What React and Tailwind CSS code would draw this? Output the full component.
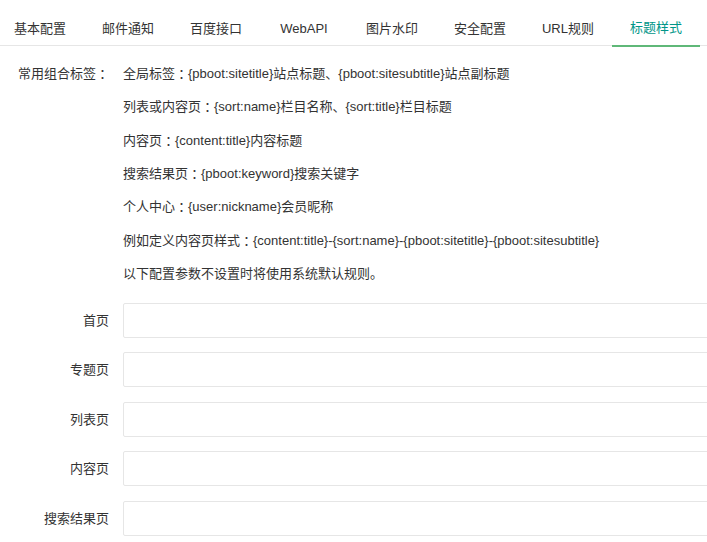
import React from 'react';

const tabs = ['基本配置', '邮件通知', '百度接口', 'WebAPI', '图片水印', '安全配置', 'URL规则', '标题样式'];

const tips = [
  ['全局标签', '{pboot:sitetitle}站点标题、{pboot:sitesubtitle}站点副标题'],
  ['列表或内容页', '{sort:name}栏目名称、{sort:title}栏目标题'],
  ['内容页', '{content:title}内容标题'],
  ['搜索结果页', '{pboot:keyword}搜索关键字'],
  ['个人中心', '{user:nickname}会员昵称'],
  ['例如定义内容页样式', '{content:title}-{sort:name}-{pboot:sitetitle}-{pboot:sitesubtitle}']
];

const fields = [
  { name: 'index_title', label: '首页' },
  { name: 'special_title', label: '专题页' },
  { name: 'list_title', label: '列表页' },
  { name: 'content_title', label: '内容页' },
  { name: 'search_title', label: '搜索结果页' }
];

// centred full-width colon, like the Windows rendering in the screenshot
const Colon = () => (
  <span style={{ fontFamily: '"Noto Sans CJK TC", sans-serif' }}>：</span>
);

const App = () => {
  return (
    <div
      className="w-[707px] h-[542px] overflow-hidden bg-white text-[13px] text-[#333]"
      style={{ fontFamily: '"Liberation Sans", "Noto Sans CJK SC", sans-serif' }}
    >
      {/* Tabs */}
      <div className="mt-[6px] flex h-[40px] border-b border-[#e6e6e6] ml-[-4px]">
        {tabs.map((t, i) => {
          const active = i === tabs.length - 1;
          return (
            <div
              key={t}
              className={
                active
                  ? 'w-[88px] shrink-0 h-[41px] border-b-2 border-[#5FB878] text-[#009688] flex items-center justify-center pt-[5px]'
                  : 'w-[88px] shrink-0 h-[40px] flex items-center justify-center pt-[6px]'
              }
            >
              {t}
            </div>
          );
        })}
      </div>

      {/* Tips */}
      <div className="mt-[11px] flex">
        <div className="w-[109px] shrink-0 h-[33.33px] flex items-center justify-end">
          常用组合标签<Colon />
        </div>
        <div className="ml-[14px] flex flex-col">
          {tips.map(([k, v]) => (
            <div key={k} className="h-[33.33px] flex items-center whitespace-nowrap">
              {k}<Colon />{v}
            </div>
          ))}
          <div className="h-[33.33px] flex items-center whitespace-nowrap">以下配置参数不设置时将使用系统默认规则。</div>
        </div>
      </div>

      {/* Inputs */}
      <div className="mt-[12.5px] flex flex-col gap-[14.5px]">
        {fields.map((f) => (
          <div key={f.name} className="flex items-center">
            <label className="w-[109px] shrink-0 text-right">{f.label}</label>
            <input
              type="text"
              name={f.name}
              className="ml-[14px] w-[620px] shrink-0 h-[35px] border border-[#e6e6e6] rounded-[2px] px-[10px] outline-none"
            />
          </div>
        ))}
      </div>
    </div>
  );
};

export default App;
